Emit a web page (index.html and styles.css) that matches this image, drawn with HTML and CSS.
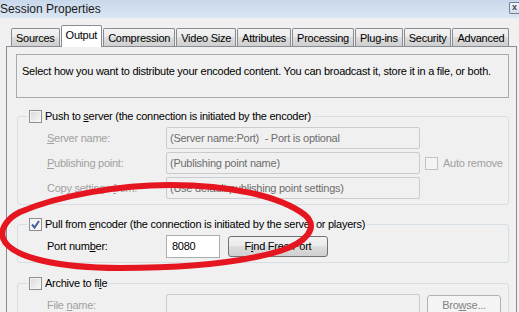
FILE: index.html
```html
<!DOCTYPE html>
<html lang="en">

    <head>
        <meta charset="UTF-8">
        <title>Session Properties</title>
        <link rel="stylesheet" href="styles.css">
    </head>

    <body>
        <div class="titlebar">
            <span class="title">Session Properties</span>
            <span class="close">x</span>
        </div>

        <div class="tabs">
            <div class="tab">Sources</div>
            <div class="tab active">Output</div>
            <div class="tab">Compression</div>
            <div class="tab">Video Size</div>
            <div class="tab">Attributes</div>
            <div class="tab">Processing</div>
            <div class="tab">Plug-ins</div>
            <div class="tab">Security</div>
            <div class="tab">Advanced</div>
        </div>

        <div class="panel">
            <div class="desc">Select how you want to distribute your encoded content. You can broadcast it, store it in a file, or both.</div>

            <fieldset class="group">
                <legend><span class="check"></span><span>Push to <u>s</u>erver (the connection is initiated by the encoder)</span></legend>
                <div class="row">
                    <span class="lbl off"><u>S</u>erver name:</span>
                    <input class="field" type="text" value="(Server name:Port)  - Port is optional" disabled>
                </div>
                <div class="row">
                    <span class="lbl off"><u>P</u>ublishing point:</span>
                    <input class="field" type="text" value="(Publishing point name)" disabled>
                    <span class="check off"></span>
                    <span class="side off">Auto remove</span>
                </div>
                <div class="row">
                    <span class="lbl off">Copy settings <u>f</u>rom:</span>
                    <input class="field" type="text" value="(Use default publishing point settings)" disabled>
                </div>
            </fieldset>

            <fieldset class="group pull">
                <legend><span class="check on"></span><span>Pull from <u>e</u>ncoder (the connection is initiated by the server or players)</span></legend>
                <div class="row">
                    <span class="lbl">Port num<u>b</u>er:</span>
                    <input class="field port" type="text" value="8080">
                    <button class="btn">F<u>i</u>nd Free Port</button>
                </div>
            </fieldset>

            <fieldset class="group archive">
                <legend><span class="check"></span><span>Archive to fi<u>l</u>e</span></legend>
                <div class="row">
                    <span class="lbl off">File <u>n</u>ame:</span>
                    <input class="field" type="text" value="" disabled>
                    <button class="btn browse" disabled>Bro<u>w</u>se...</button>
                </div>
            </fieldset>
        </div>

        <svg class="scribble" width="519" height="312" viewBox="0 0 519 312">
            <path d="M 20 212 C 60 195, 120 185, 170 185 C 230 185, 280 196, 305 215 C 320 228, 305 243, 280 251 C 240 263, 180 268, 120 268 C 60 268, 10 258, 3 238 C 0 228, 8 218, 20 212 Z"
                fill="none" stroke="#e5161f" stroke-width="6" stroke-linecap="round" stroke-linejoin="round"/>
        </svg>
    </body>

</html>
```

FILE: styles.css
```css
body {
    margin: 0;
    width: 519px;
    height: 312px;
    overflow: hidden;
    position: relative;
    background: #f0f0f0;
    font-family: "Liberation Sans", Arial, sans-serif;
    font-size: 11px;
    letter-spacing: -0.25px;
    color: #000;
}

.titlebar {
    height: 18px;
    background: linear-gradient(#c8d8eb, #dbe6f3);
    display: flex;
    justify-content: space-between;
    align-items: flex-start;
    letter-spacing: 0;
}

.title {
    font-size: 12px;
    line-height: 16px;
    color: #1a1a1a;
    padding-top: 1px;
}

.close {
    width: 10px;
    height: 12px;
    margin-top: 2px;
    box-sizing: border-box;
    border: 1px solid #6f7f97;
    border-right: none;
    border-radius: 2px 0 0 2px;
    background: linear-gradient(#f4f7fb, #d3dcea);
    font-size: 9px;
    line-height: 9px;
    font-weight: bold;
    color: #3a4a66;
    text-align: center;
}

.tabs {
    display: flex;
    align-items: flex-end;
    height: 21px;
    margin-top: 7px;
    padding-left: 11px;
}

.tab {
    flex: none;
    height: 18px;
    box-sizing: border-box;
    padding: 0 4px;
    margin-right: 1px;
    border: 1px solid #898c95;
    border-bottom: none;
    border-radius: 2px 2px 0 0;
    background: linear-gradient(#f3f3f3, #ebebeb 45%, #dddddd 50%, #cfcfcf);
    display: flex;
    align-items: center;
    justify-content: center;
}

.tab.active {
    height: 22px;
    margin-bottom: -1px;
    padding-bottom: 4px;
    background: #fff;
    position: relative;
    z-index: 1;
}

.panel {
    margin-left: 6px;
    width: 511px;
    height: 280px;
    box-sizing: border-box;
    border: 1px solid #898c95;
    padding: 7px 7px 0 9px;
}

.desc {
    height: 44px;
    box-sizing: border-box;
    border: 1px solid #a9a9a9;
    padding: 10px 5px 0;
    line-height: 13px;
    white-space: nowrap;
}

.group {
    margin: 11px 0 0 1px;
    padding: 4px 0 5px 29px;
    border: 1px solid #d5dfe5;
    border-radius: 3px;
    min-inline-size: 0;
}

.group.pull {
    margin-top: 12px;
}

.group.archive {
    margin-top: 13px;
}

legend {
    margin-left: -20px;
    padding: 0 2px;
    display: flex;
    align-items: center;
    gap: 3px;
    line-height: 14px;
}

.check {
    width: 13px;
    height: 13px;
    box-sizing: border-box;
    border: 1px solid #8e8f8f;
    background: linear-gradient(135deg, #d8d8d8, #f8f8f8);
    box-shadow: inset 0 0 0 1px #f4f4f4;
    display: inline-block;
    flex: none;
}

.check.on {
    background: #f4f4f4 url("data:image/svg+xml,%3Csvg xmlns='http://www.w3.org/2000/svg' width='11' height='11'%3E%3Cpath d='M2 5.5 L4.5 8.5 L9 2' fill='none' stroke='%234a5f97' stroke-width='2'/%3E%3C/svg%3E") center no-repeat;
}

.check.off {
    border-color: #c2c2c2;
    background: #f4f4f4;
    margin-left: 5px;
}

.row {
    display: flex;
    align-items: center;
    height: 22px;
    margin-bottom: 3px;
}

.row:last-child {
    margin-bottom: 0;
}

.lbl {
    width: 119px;
    flex: none;
}

.off {
    color: #a0a0a0;
}

.side {
    margin-left: 5px;
}

.field {
    width: 254px;
    height: 22px;
    box-sizing: border-box;
    margin: 0;
    padding: 0 3px;
    border: 1px solid #c9cbd0;
    border-radius: 2px;
    background: #f0f0f0;
    font-family: inherit;
    font-size: 11px;
    letter-spacing: -0.25px;
    color: #6d6d6d;
}

.field.port {
    width: 54px;
    height: 23px;
    padding-left: 5px;
    border-color: #abadb3;
    border-radius: 0;
    background: #fff;
    color: #000;
}

.btn {
    width: 100px;
    height: 21px;
    margin-left: 8px;
    padding: 0;
    border: 1px solid #707070;
    border-radius: 3px;
    background: linear-gradient(#f2f2f2, #ebebeb 45%, #dddddd 50%, #cfcfcf);
    font-family: inherit;
    font-size: 11px;
    letter-spacing: -0.25px;
    color: #000;
}

.btn.browse {
    width: 74px;
    margin-left: 7px;
    border-color: #adb2b5;
    background: #f4f4f4;
    color: #838383;
}

.scribble {
    position: absolute;
    top: 0;
    left: 0;
    pointer-events: none;
}
```
